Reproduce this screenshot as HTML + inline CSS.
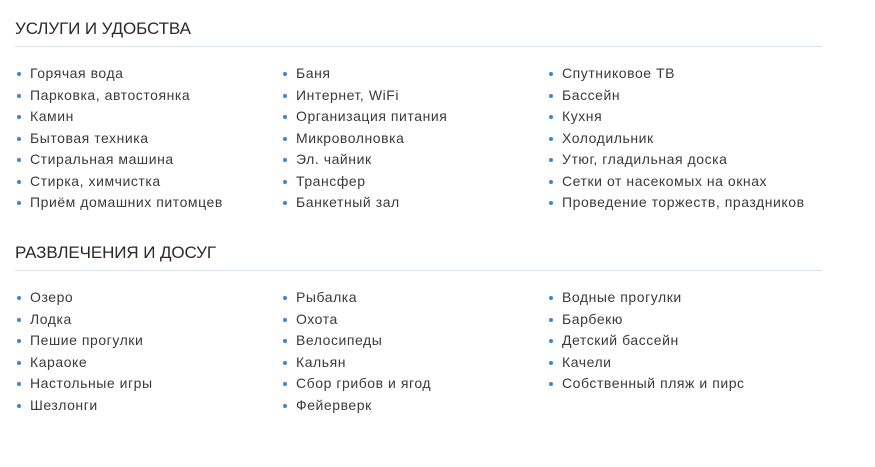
<!DOCTYPE html>
<html><head><meta charset="utf-8"><style>
body{margin:0;background:#fff;font-family:"Liberation Sans",Arial,sans-serif;color:#3a3a3a;width:875px;height:467px;overflow:hidden;position:relative}
h2{position:absolute;left:15px;margin:0;font-weight:normal;font-size:17px;color:#2a2a2a;letter-spacing:-0.1px}
.line{position:absolute;left:15px;width:807px;height:1px;background:#d6e2e8}
ul{position:absolute;margin:0;padding:0;list-style:none;font-size:14px;line-height:21.5px;letter-spacing:0.55px}
li{position:relative;padding-left:15px;white-space:nowrap}
li:before{content:"";position:absolute;left:2px;top:9px;width:4px;height:4px;border-radius:50%;background:#3b87c8}
</style></head><body>
<h2 style="top:19px">УСЛУГИ И УДОБСТВА</h2>
<div class="line" style="top:46px"></div>
<ul style="left:15px;top:63px"><li>Горячая вода</li><li>Парковка, автостоянка</li><li>Камин</li><li>Бытовая техника</li><li>Стиральная машина</li><li>Стирка, химчистка</li><li>Приём домашних питомцев</li></ul>
<ul style="left:281px;top:63px"><li>Баня</li><li>Интернет, WiFi</li><li>Организация питания</li><li>Микроволновка</li><li>Эл. чайник</li><li>Трансфер</li><li>Банкетный зал</li></ul>
<ul style="left:547px;top:63px"><li>Спутниковое ТВ</li><li>Бассейн</li><li>Кухня</li><li>Холодильник</li><li>Утюг, гладильная доска</li><li>Сетки от насекомых на окнах</li><li>Проведение торжеств, праздников</li></ul>
<h2 style="top:243px">РАЗВЛЕЧЕНИЯ И ДОСУГ</h2>
<div class="line" style="top:270px"></div>
<ul style="left:15px;top:287px"><li>Озеро</li><li>Лодка</li><li>Пешие прогулки</li><li>Караоке</li><li>Настольные игры</li><li>Шезлонги</li></ul>
<ul style="left:281px;top:287px"><li>Рыбалка</li><li>Охота</li><li>Велосипеды</li><li>Кальян</li><li>Сбор грибов и ягод</li><li>Фейерверк</li></ul>
<ul style="left:547px;top:287px"><li>Водные прогулки</li><li>Барбекю</li><li>Детский бассейн</li><li>Качели</li><li>Собственный пляж и пирс</li></ul>
</body></html>
